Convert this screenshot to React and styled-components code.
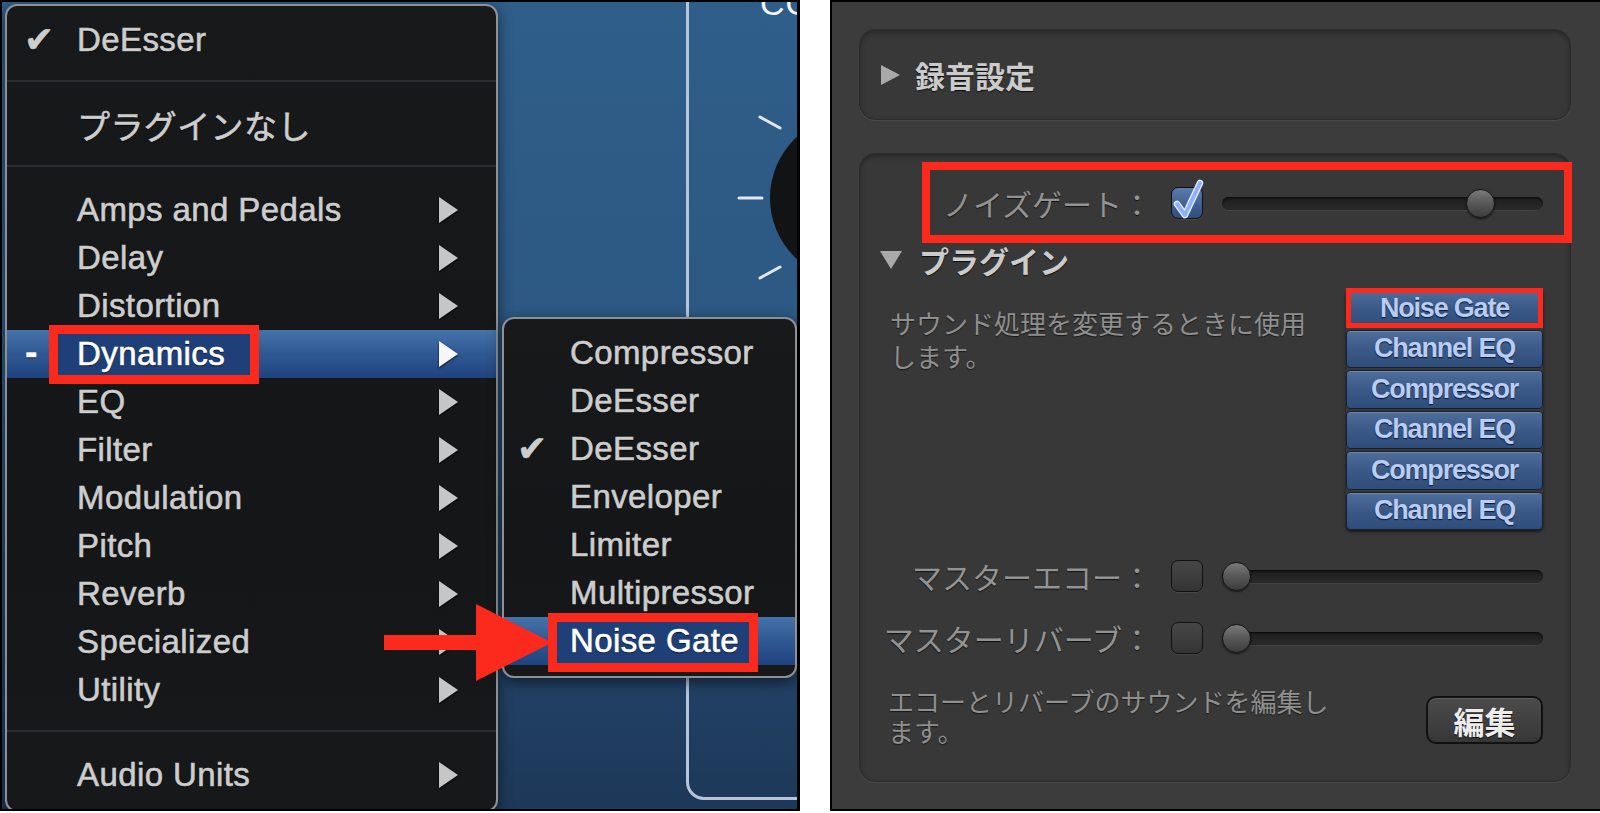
import React from 'react'
import styled, { createGlobalStyle } from 'styled-components'

const GlobalStyle = createGlobalStyle`
  html, body {
    margin: 0;
    padding: 0;
    background: #fff;
  }
  body {
    font-family: "Liberation Sans", "Noto Sans CJK JP", Arial, sans-serif;
  }
`

const Page = styled.div`
  display: flex;
  gap: 30px;
  width: 1600px;
  height: 813px;
  background: #fff;
`

/* ---------- left shot: Logic plugin menu ---------- */

const LogicShot = styled.div`
  position: relative;
  width: 800px;
  height: 811px;
  box-sizing: border-box;
  border: 2px solid #000;
  border-right-width: 3px;
  overflow: hidden;
  background: linear-gradient(180deg, #2f5e8a 0%, #2c5882 45%, #23446a 78%, #1d3858 100%);
`

const PluginFrame = styled.div`
  position: absolute;
  left: 684px;
  top: -30px;
  width: 200px;
  height: 828px;
  box-sizing: border-box;
  border: 3px solid #b6c5d8;
  border-radius: 18px;
`

const KnobArt = styled.svg`
  position: absolute;
  left: 734px;
  top: 98px;
`

const CutLabel = styled.div`
  position: absolute;
  left: 758px;
  top: -16px;
  font-size: 34px;
  line-height: 34px;
  color: #f2f4f7;
  letter-spacing: 1px;
`

const Menu = styled.div`
  position: absolute;
  left: ${p => p.$left}px;
  top: ${p => p.$top}px;
  width: ${p => p.$width}px;
  box-sizing: border-box;
  border: 2px solid #8e9094;
  border-radius: 12px;
  padding: 10px 0 11px;
  background: linear-gradient(180deg, #18191b 0%, #151617 60%, #171819 100%);
  box-shadow: 0 4px 14px rgba(0, 0, 0, 0.55);
`

const Separator = styled.div`
  height: 2px;
  margin: 16px 0 19px;
  background: #2c2d30;
`

const Item = styled.div`
  position: relative;
  display: flex;
  align-items: center;
  height: 48px;
  padding-left: ${p => p.$indent}px;
  padding-right: 38px;
  font-size: 33px;
  letter-spacing: 0.4px;
  color: ${p => (p.$active ? '#ffffff' : '#cdcdcd')};
  -webkit-text-stroke: 0.6px ${p => (p.$active ? '#ffffff' : '#cdcdcd')};
  text-shadow: 0 1px 1px rgba(0, 0, 0, 0.9);
  background: ${p =>
    p.$active
      ? 'linear-gradient(180deg, #4673ab 0%, #2f5892 50%, #1f4381 100%)'
      : 'transparent'};
`

const Mark = styled.span`
  position: absolute;
  left: ${p => p.$left}px;
  font-family: "DejaVu Sans", sans-serif;
  font-size: ${p => (p.$dash ? 30 : 36)}px;
  font-weight: bold;
  line-height: 1;
`

const Label = styled.span`
  position: relative;
  z-index: 1;
  flex: 1;
  white-space: nowrap;
`

const SubArrow = styled.span`
  width: 0;
  height: 0;
  border-top: 13px solid transparent;
  border-bottom: 13px solid transparent;
  border-left: 19px solid ${p => (p.$active ? '#f4f6fa' : '#c6c6c6')};
  filter: drop-shadow(0 1px 1px rgba(0, 0, 0, 0.8));
`

const RedBox = styled.div`
  position: absolute;
  left: ${p => p.$left}px;
  top: ${p => p.$top}px;
  width: ${p => p.$width}px;
  height: ${p => p.$height}px;
  box-sizing: border-box;
  border: ${p => p.$thick}px solid #fb2a1d;
  background: ${p => p.$fill || 'transparent'};
`

const RedArrow = styled.svg`
  position: absolute;
  left: 382px;
  top: 601px;
`

const mainItems = [
  'Amps and Pedals', 'Delay', 'Distortion', 'Dynamics', 'EQ', 'Filter',
  'Modulation', 'Pitch', 'Reverb', 'Specialized', 'Utility',
]

const subItems = [
  { name: 'Compressor' },
  { name: 'DeEsser' },
  { name: 'DeEsser', checked: true },
  { name: 'Enveloper' },
  { name: 'Limiter' },
  { name: 'Multipressor' },
  { name: 'Noise Gate', active: true },
]

const PluginMenu = () => (
  <LogicShot>
    <PluginFrame />
    <CutLabel>CO</CutLabel>
    <KnobArt width="70" height="200" viewBox="0 0 70 200">
      <circle cx="117" cy="98" r="83" fill="#121314" />
      <g stroke="#e2e8ef" strokeWidth="3" strokeLinecap="round">
        <line x1="24" y1="17" x2="44" y2="28" />
        <line x1="3" y1="98" x2="26" y2="98" />
        <line x1="24" y1="178" x2="44" y2="167" />
      </g>
    </KnobArt>

    <Menu $left={3} $top={2} $width={493}>
      <Item $indent={70}>
        <Mark $left={17}>✔</Mark>
        <Label>DeEsser</Label>
      </Item>
      <Separator />
      <Item $indent={70}>
        <Label>プラグインなし</Label>
      </Item>
      <Separator />
      {mainItems.map(name => {
        const active = name === 'Dynamics'
        return (
          <Item key={name} $indent={70} $active={active}>
            {active && <Mark $left={18} $dash>-</Mark>}
            {active && (
              <RedBox $left={42} $top={-5} $width={210} $height={59} $thick={9} $fill="#1f3f79" />
            )}
            <Label>{name}</Label>
            <SubArrow $active={active} />
          </Item>
        )
      })}
      <Separator />
      <Item $indent={70}>
        <Label>Audio Units</Label>
        <SubArrow />
      </Item>
    </Menu>

    <Menu $left={500} $top={315} $width={295}>
      {subItems.map((it, i) => (
        <Item key={i} $indent={66} $active={it.active}>
          {it.checked && <Mark $left={13}>✔</Mark>}
          {it.active && (
            <RedBox $left={44} $top={-4} $width={210} $height={59} $thick={9} $fill="#1f3f79" />
          )}
          <Label>{it.name}</Label>
        </Item>
      ))}
    </Menu>

    <RedArrow width="170" height="80" viewBox="0 0 170 80">
      <rect x="0" y="32" width="96" height="15" fill="#fb2a1d" />
      <polygon points="92,1 168,39.5 92,78" fill="#fb2a1d" />
    </RedArrow>
  </LogicShot>
)

/* ---------- right shot: GarageBand inspector ---------- */

const Inspector = styled.div`
  display: flex;
  flex-direction: column;
  gap: 33px;
  width: 770px;
  height: 811px;
  box-sizing: border-box;
  border: 2px solid #000;
  border-right: none;
  padding: 27px 29px 0 27px;
  background: #3c3c3c;
  font-family: "Liberation Sans", "Noto Sans CJK JP", sans-serif;
`

const Section = styled.div`
  position: relative;
  height: ${p => p.$height}px;
  box-sizing: border-box;
  border: 1px solid #2c2c2c;
  border-radius: 16px;
  background: #383838;
  box-shadow: inset 0 2px 5px rgba(0, 0, 0, 0.35), 0 1px 0 rgba(255, 255, 255, 0.07);
`

const SectionHead = styled.div`
  display: flex;
  align-items: center;
  gap: ${p => p.$gap}px;
  height: ${p => p.$height}px;
  padding-left: ${p => p.$pad}px;
  font-size: 30px;
  font-weight: bold;
  color: #cbcbcb;
  text-shadow: 0 1px 1px rgba(0, 0, 0, 0.8);
`

const Disclosure = styled.span`
  width: 0;
  height: 0;
  ${p =>
    p.$open
      ? `border-left: 11px solid transparent;
         border-right: 11px solid transparent;
         border-top: 18px solid #a9a9a9;`
      : `border-top: 10px solid transparent;
         border-bottom: 10px solid transparent;
         border-left: 19px solid #a9a9a9;`}
`

const Body = styled.div`
  display: flex;
  flex-direction: column;
  padding: 18px 27px 0 0;
`

const ControlRow = styled.div`
  position: relative;
  display: grid;
  grid-template-columns: 292px 32px 321px;
  column-gap: 19px;
  align-items: center;
  height: 62px;
  margin-top: ${p => p.$mt || 0}px;
`

const RowLabel = styled.span`
  text-align: right;
  font-size: 30px;
  color: #939393;
  white-space: nowrap;
  text-shadow: 0 1px 1px rgba(0, 0, 0, 0.7);
`

const Check = styled.div`
  position: relative;
  width: 32px;
  height: 32px;
  box-sizing: border-box;
  border: 1.5px solid #101010;
  border-radius: 7px;
  background: ${p =>
    p.$on
      ? 'linear-gradient(180deg, #5a7bad 0%, #2e4c7d 100%)'
      : 'linear-gradient(180deg, #474747 0%, #343434 100%)'};
  box-shadow: 0 1px 0 rgba(255, 255, 255, 0.08);
`

const Tick = styled.svg`
  position: absolute;
  left: 2px;
  top: -7px;
  overflow: visible;
`

const Track = styled.div`
  position: relative;
  height: 13px;
  border-radius: 7px;
  background: linear-gradient(180deg, #1c1c1c 0%, #2b2b2b 100%);
  box-shadow: inset 0 1px 2px rgba(0, 0, 0, 0.8), 0 1px 0 rgba(255, 255, 255, 0.06);
`

const Thumb = styled.div`
  position: absolute;
  top: 50%;
  left: ${p => p.$left}px;
  width: 29px;
  height: 29px;
  margin-top: -14.5px;
  box-sizing: border-box;
  border: 1.5px solid #141414;
  border-radius: 50%;
  background: linear-gradient(180deg, #7a7a7a 0%, #5a5a5a 45%, #3c3c3c 100%);
  box-shadow: 0 1px 2px rgba(0, 0, 0, 0.6);
`

const PluginArea = styled.div`
  display: flex;
  justify-content: space-between;
  align-items: flex-start;
  margin-top: 3px;
  padding-left: 30px;
`

const Note = styled.p`
  margin: ${p => p.$mt}px 0 0;
  font-size: 26px;
  line-height: ${p => p.$lh}px;
  color: #8f8f8f;
  text-shadow: 0 1px 1px rgba(0, 0, 0, 0.6);
`

const Stack = styled.div`
  display: flex;
  flex-direction: column;
  gap: 2px;
  width: 197px;
  border-radius: 5px;
  box-shadow: 0 2px 3px rgba(0, 0, 0, 0.6);
`

const PluginButton = styled.div`
  position: relative;
  display: flex;
  align-items: center;
  justify-content: center;
  height: 38.5px;
  box-sizing: border-box;
  border: 1px solid #18202e;
  border-radius: 4px;
  background: linear-gradient(180deg, #4f6e9c 0%, #3a5986 50%, #2f4d7a 100%);
  box-shadow: inset 0 1px 0 rgba(255, 255, 255, 0.18);
  font-size: 27px;
  font-weight: bold;
  letter-spacing: -1.2px;
  color: #b9ccf3;
  text-shadow: 0 1px 1px #0b1426;
`

const ButtonMark = styled.div`
  position: absolute;
  left: -1px;
  right: -1px;
  top: -2px;
  bottom: -1.5px;
  border: 5px solid #fb2a1d;
`

const Footer = styled.div`
  display: flex;
  justify-content: space-between;
  align-items: flex-start;
  margin-top: 19px;
  padding-left: 28px;
`

const EditButton = styled.div`
  display: flex;
  align-items: center;
  justify-content: center;
  width: 117px;
  height: 48px;
  margin-top: 8px;
  box-sizing: border-box;
  border: 2px solid #111;
  border-radius: 10px;
  background: linear-gradient(180deg, #4b4b4b 0%, #373737 100%);
  box-shadow: inset 0 1px 0 rgba(255, 255, 255, 0.12);
  font-size: 31px;
  font-weight: bold;
  color: #ececec;
  text-shadow: 0 1px 1px #000;
`

const Slider = ({ left }) => (
  <Track>
    <Thumb $left={left} />
  </Track>
)

const plugins = ['Noise Gate', 'Channel EQ', 'Compressor', 'Channel EQ', 'Compressor', 'Channel EQ']

const TrackInspector = () => (
  <Inspector>
    <Section $height={91}>
      <SectionHead $height={89} $pad={21} $gap={15}>
        <Disclosure />
        <span>録音設定</span>
      </SectionHead>
    </Section>

    <Section $height={629}>
      <Body>
        <ControlRow>
          <RedBox $left={62} $top={-10} $width={650} $height={81} $thick={8} />
          <RowLabel>ノイズゲート：</RowLabel>
          <Check $on>
            <Tick width="28" height="38" viewBox="0 0 28 38">
              <path d="M3 23 L11 34 L26 2" fill="none" stroke="#e8eeff" strokeWidth="6.5" strokeLinecap="round" strokeLinejoin="round" />
              <path d="M3 23 L11 34 L26 2" fill="none" stroke="#8fb0ff" strokeWidth="4" strokeLinecap="round" strokeLinejoin="round" />
            </Tick>
          </Check>
          <Slider left={244} />
        </ControlRow>

        <SectionHead $height={52} $pad={20} $gap={17}>
          <Disclosure $open />
          <span>プラグイン</span>
        </SectionHead>

        <PluginArea>
          <Note $mt={20} $lh={33}>
            サウンド処理を変更するときに使用
            <br />
            します。
          </Note>
          <Stack>
            {plugins.map((name, i) => (
              <PluginButton key={i}>
                {i === 0 && <ButtonMark />}
                {name}
              </PluginButton>
            ))}
          </Stack>
        </PluginArea>

        <ControlRow $mt={15}>
          <RowLabel>マスターエコー：</RowLabel>
          <Check />
          <Slider left={0} />
        </ControlRow>
        <ControlRow>
          <RowLabel>マスターリバーブ：</RowLabel>
          <Check />
          <Slider left={0} />
        </ControlRow>

        <Footer>
          <Note $mt={0} $lh={30}>
            エコーとリバーブのサウンドを編集し
            <br />
            ます。
          </Note>
          <EditButton>編集</EditButton>
        </Footer>
      </Body>
    </Section>
  </Inspector>
)

const App = () => (
  <Page>
    <GlobalStyle />
    <PluginMenu />
    <TrackInspector />
  </Page>
)

export default App
